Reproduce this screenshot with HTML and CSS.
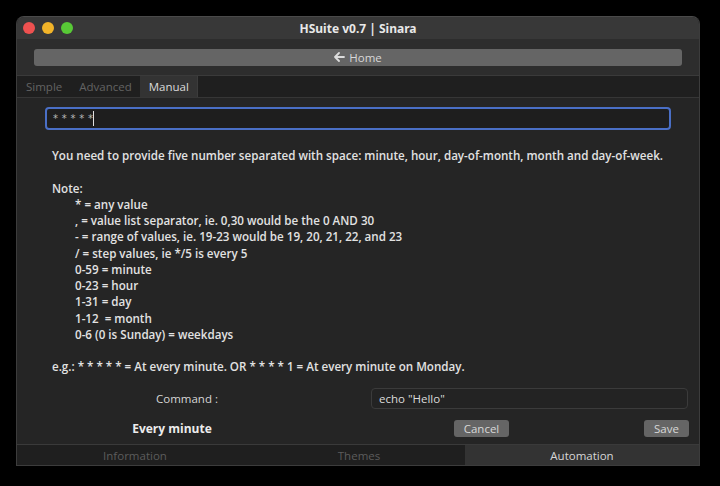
FILE: index.html
```html
<!DOCTYPE html>
<html>
<head>
<meta charset="utf-8">
<link rel="stylesheet" href="styles.css">
</head>
<body>
<div class="window">
  <div class="titlebar">
    <div class="lights">
      <span class="light red"></span>
      <span class="light yellow"></span>
      <span class="light green"></span>
    </div>
    <div class="title">HSuite v0.7 | Sinara</div>
  </div>
  <div class="toolbar">
    <div class="homebtn">
      <svg class="arrow" width="11" height="10" viewBox="0 0 11 10"><path d="M5 1 L1 5 L5 9 M1 5 H10" fill="none" stroke="#dcdcdc" stroke-width="1.8" stroke-linecap="round" stroke-linejoin="round"/></svg>
      <span>Home</span>
    </div>
  </div>
  <div class="tabs">
    <div class="tab">Simple</div>
    <div class="tab">Advanced</div>
    <div class="tab active">Manual</div>
  </div>
  <div class="content">
    <div class="cron"><span class="stars">* * * * *</span><span class="caret"></span></div>
    <div class="help">
      <div class="line">You need to provide five number separated with space: minute, hour, day-of-month, month and day-of-week.</div>
      <div class="line">&nbsp;</div>
      <div class="line">Note:</div>
      <div class="line ind">* = any value</div>
      <div class="line ind">, = value list separator, ie. 0,30 would be the 0 AND 30</div>
      <div class="line ind">- = range of values, ie. 19-23 would be 19, 20, 21, 22, and 23</div>
      <div class="line ind">/ = step values, ie */5 is every 5</div>
      <div class="line ind">0-59 = minute</div>
      <div class="line ind">0-23 = hour</div>
      <div class="line ind">1-31 = day</div>
      <div class="line ind">1-12 &nbsp;= month</div>
      <div class="line ind">0-6 (0 is Sunday) = weekdays</div>
      <div class="line">&nbsp;</div>
      <div class="line">e.g.: * * * * * = At every minute. OR * * * * 1 = At every minute on Monday.</div>
    </div>
    <div class="cmdrow">
      <div class="cmdlabel">Command :</div>
      <div class="cmdinput">echo "Hello"</div>
    </div>
    <div class="actrow">
      <div class="every">Every minute</div>
      <div class="btn cancel">Cancel</div>
      <div class="btn save">Save</div>
    </div>
  </div>
  <div class="bottomtabs">
    <div class="btab first">Information</div>
    <div class="btab second">Themes</div>
    <div class="btab active">Automation</div>
  </div>
</div>
</body>
</html>
```
FILE: styles.css
```css
html, body {
  margin: 0;
  padding: 0;
  background: #000;
}
body {
  padding: 16px;
  font-family: "Open Sans", "Noto Sans", sans-serif;
}
.window {
  width: 684px;
  height: 450px;
  box-sizing: border-box;
  border: 1px solid #3c3c3c;
  border-top-color: #4a4a4a;
  border-radius: 8px 8px 0 0;
  background: #252525;
  display: flex;
  flex-direction: column;
  overflow: hidden;
}
.titlebar {
  height: 22px;
  background: #383838;
  display: flex;
  align-items: center;
  position: relative;
  flex: none;
}
.lights {
  display: flex;
  gap: 7px;
  padding-left: 6px;
}
.light {
  width: 12px;
  height: 12px;
  border-radius: 50%;
  display: block;
}
.red { background: #ee5150; }
.yellow { background: #f2b429; }
.green { background: #58c936; }
.title {
  position: absolute;
  left: 0;
  right: 0;
  text-align: center;
  color: #e8e8e8;
  font-weight: 700;
  font-size: 12px;
  font-family: "Noto Sans", sans-serif;
}
.toolbar {
  height: 37px;
  background: #2d2d2d;
  display: flex;
  align-items: center;
  padding: 0 17px;
  flex: none;
  box-sizing: border-box;
  border-bottom: 1px solid #3a3a3a;
}
.homebtn {
  flex: 1;
  height: 17px;
  border-radius: 3px;
  background: #656565;
  display: flex;
  justify-content: center;
  align-items: center;
  gap: 4px;
  color: #d8d8d8;
  font-size: 11.5px;
}
.arrow { display: block; }
.tabs {
  height: 22px;
  background: #1f1f1f;
  display: flex;
  flex: none;
  box-sizing: border-box;
  border-bottom: 1px solid #363636;
}
.tab {
  padding: 0 8px 0 9px;
  color: #636363;
  font-size: 11.5px;
  line-height: 21px;
}
.tab.active {
  background: #333333;
  color: #dadada;
  border-right: 1px solid #3c3c3c;
}
.content {
  flex: 1;
  display: flex;
  flex-direction: column;
  padding: 9px 0 0 0;
}
.cron {
  margin: 0 28px;
  height: 23px;
  box-sizing: border-box;
  border: 2px solid #4a6fc6;
  border-radius: 4px;
  background: #1e1e1e;
  display: flex;
  align-items: center;
  padding-left: 6px;
}
.stars {
  color: #b8b8b8;
  font-size: 10px;
  letter-spacing: 0.3px;
  font-family: "DejaVu Sans", sans-serif;
}
.caret {
  width: 1px;
  height: 15px;
  background: #e0e0e0;
  margin-left: 0;
}
.help {
  margin: 18px 0 0 35px;
  color: #e2e2e2;
  font-size: 11.62px;
  font-weight: 600;
  line-height: 16.25px;
  white-space: nowrap;
}
.ind { padding-left: 23px; }
.cmdrow {
  display: flex;
  align-items: center;
  margin-top: 12px;
  height: 21px;
}
.cmdlabel {
  width: 340px;
  text-align: center;
  color: #d6d6d6;
  font-size: 11.5px;
}
.cmdinput {
  margin-left: 14px;
  width: 317px;
  height: 21px;
  box-sizing: border-box;
  border: 1px solid #3b3b3b;
  border-radius: 4px;
  background: #232323;
  color: #dcdcdc;
  font-size: 11.5px;
  line-height: 19px;
  padding-left: 7px;
}
.actrow {
  display: flex;
  align-items: center;
  margin-top: 11px;
  height: 17px;
}
.every {
  width: 310px;
  text-align: center;
  color: #ececec;
  font-weight: 700;
  font-size: 12px;
}
.btn {
  height: 17px;
  border-radius: 3px;
  background: #656565;
  color: #d8d8d8;
  font-size: 11.5px;
  line-height: 17px;
  text-align: center;
}
.cancel { width: 55px; margin-left: 127px; }
.save { width: 45px; margin-left: 135px; }
.bottomtabs {
  height: 23px;
  flex: none;
  display: flex;
  background: #1f1f1f;
  border-top: 1px solid #3a3a3a;
  box-sizing: border-box;
  margin-top: 7px;
}
.btab {
  text-align: center;
  color: #5c5c5c;
  font-size: 11.5px;
  line-height: 21px;
}
.btab.first { width: 236px; }
.btab.second { width: 212px; }
.btab.active {
  flex: 1;
  background: #333333;
  color: #d6d6d6;
}
```
